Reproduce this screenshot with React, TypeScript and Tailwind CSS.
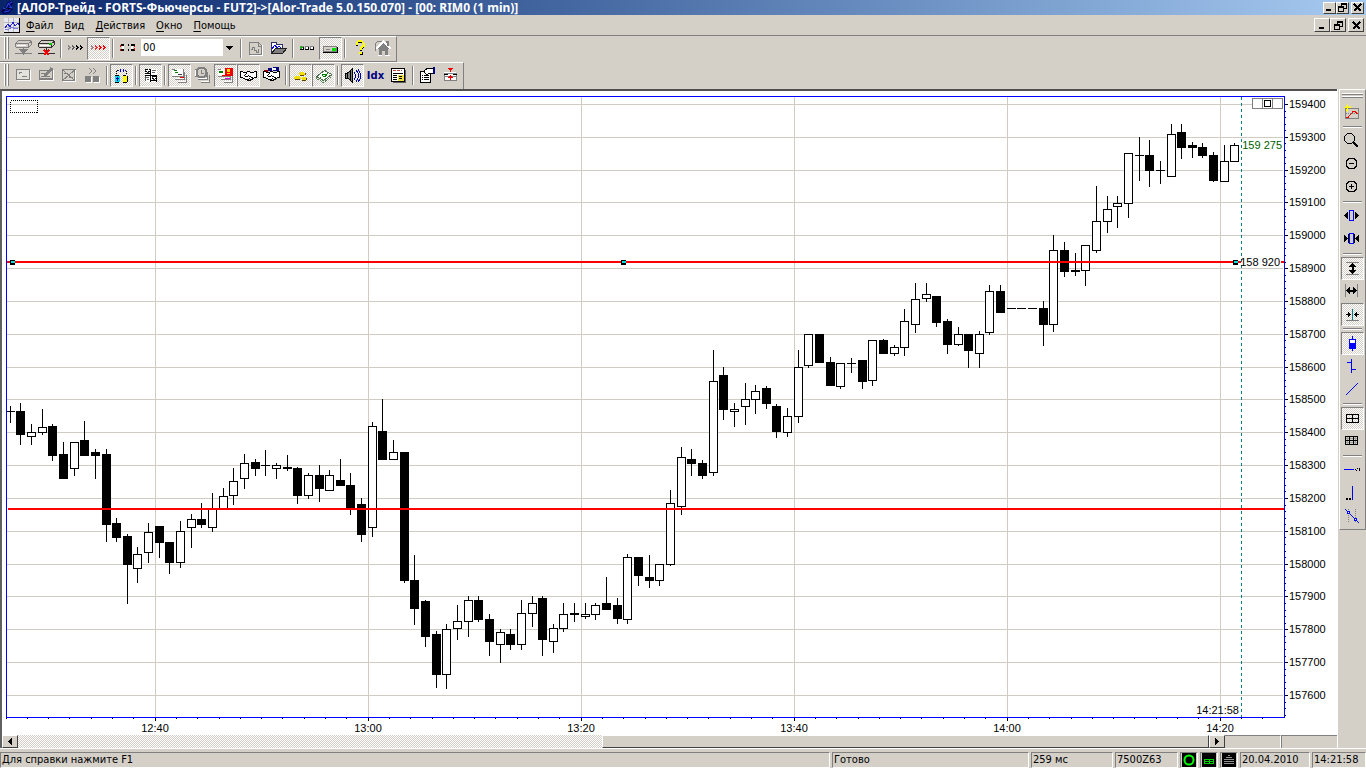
import { useState } from 'react'
import type { ReactNode } from 'react'
import clsx from 'clsx'

// [high, body top, body bottom, low, rising] in plot units, one per minute
type Candle = [number, number, number, number, number]

const CANDLES: Candle[] = [
  [406, 411, 412, 423, 0], [403, 411, 435, 445, 0], [424, 432, 437, 445, 1], [409, 427, 433, 435, 1],
  [424, 426, 456, 461, 0], [442, 454, 479, 479, 0], [442, 442, 469, 476, 1], [421, 440, 456, 456, 0],
  [449, 452, 456, 479, 0], [449, 454, 525, 542, 0], [518, 523, 538, 542, 0], [534, 536, 565, 604, 0],
  [547, 554, 569, 583, 1], [523, 532, 553, 563, 1], [526, 526, 543, 558, 0], [542, 542, 563, 574, 0],
  [521, 531, 563, 568, 1], [514, 519, 528, 548, 1], [503, 519, 525, 528, 0], [493, 508, 528, 532, 1],
  [488, 496, 510, 510, 1], [468, 481, 496, 505, 1], [454, 463, 479, 489, 1], [459, 462, 469, 476, 0],
  [450, 465, 466, 476, 0], [463, 465, 469, 479, 1], [455, 467, 469, 471, 0], [467, 468, 496, 504, 0],
  [473, 475, 496, 499, 1], [465, 475, 489, 502, 0], [470, 475, 491, 491, 1], [459, 480, 486, 486, 0],
  [473, 485, 509, 515, 0], [498, 504, 535, 542, 0], [422, 426, 528, 537, 1], [399, 431, 460, 460, 0],
  [440, 452, 460, 460, 1], [452, 452, 581, 583, 0], [555, 580, 609, 625, 0], [600, 601, 637, 647, 0],
  [631, 634, 675, 688, 0], [624, 629, 675, 689, 1], [605, 621, 629, 640, 1], [596, 600, 622, 637, 1],
  [596, 600, 620, 622, 0], [614, 619, 642, 656, 0], [629, 632, 645, 663, 1], [629, 634, 645, 650, 0],
  [600, 613, 645, 650, 1], [596, 603, 614, 627, 1], [596, 598, 640, 656, 0], [624, 628, 642, 653, 1],
  [603, 614, 629, 632, 1], [603, 613, 615, 622, 0], [603, 614, 617, 619, 1], [603, 605, 615, 620, 1],
  [577, 603, 610, 610, 0], [598, 605, 619, 624, 0], [554, 557, 620, 624, 1], [557, 557, 576, 586, 0],
  [555, 577, 581, 588, 0], [564, 564, 581, 586, 1], [490, 503, 565, 566, 1], [447, 457, 507, 515, 1],
  [449, 459, 464, 476, 0], [460, 463, 476, 479, 0], [350, 381, 473, 476, 1], [367, 375, 410, 420, 0],
  [403, 409, 412, 427, 1], [383, 399, 407, 425, 1], [385, 391, 400, 414, 1], [386, 388, 404, 409, 0],
  [404, 406, 432, 438, 0], [408, 416, 433, 437, 1], [350, 367, 417, 423, 1], [334, 334, 366, 368, 1],
  [334, 334, 363, 363, 0], [357, 362, 386, 386, 0], [363, 363, 387, 389, 1], [358, 363, 364, 373, 0],
  [360, 360, 382, 389, 0], [340, 340, 381, 386, 1], [339, 340, 354, 354, 0], [345, 347, 354, 356, 1],
  [309, 321, 348, 356, 1], [283, 299, 325, 333, 1], [283, 294, 299, 302, 1], [296, 296, 323, 327, 0],
  [319, 321, 345, 354, 0], [327, 334, 345, 346, 1], [334, 334, 351, 368, 0], [331, 334, 354, 368, 1],
  [285, 291, 333, 335, 1], [285, 291, 313, 313, 0], [308, 308, 309, 309, 0], [308, 308, 309, 309, 0],
  [308, 308, 309, 309, 0], [301, 308, 325, 346, 0], [235, 250, 325, 332, 1], [242, 250, 272, 277, 0],
  [253, 270, 272, 276, 0], [245, 245, 271, 286, 1], [186, 221, 251, 253, 1], [196, 209, 222, 233, 1],
  [196, 203, 207, 228, 1], [153, 153, 204, 218, 1], [137, 155, 156, 181, 0], [140, 155, 171, 187, 0],
  [161, 170, 171, 184, 0], [124, 134, 177, 177, 1], [124, 132, 148, 159, 0], [142, 145, 148, 158, 0],
  [143, 147, 156, 158, 0], [152, 155, 181, 182, 0], [145, 161, 182, 182, 1], [143, 145, 162, 162, 1],
]

const TIMES = ['12:40', '13:00', '13:20', '13:40', '14:00', '14:20']
const PRICES = Array.from({ length: 19 }, (_, i) => 159400 - i * 100)

const priceY = (i: number) => Math.floor(104.5 + i * 32.83)
const candleX = (i: number) => Math.floor(10.15 + i * 10.65)

const RAISED = 'border border-t-white border-l-white border-r-[#404040] border-b-[#404040] bg-[#d4d0c8]'
const DITHER = 'bg-[repeating-conic-gradient(#fff_0_25%,#d4d0c8_0_50%)] bg-[length:2px_2px]'
const UI_FONT = "font-['DejaVu_Sans_Condensed','DejaVu_Sans',sans-serif]"
const TITLE_FONT = "font-['Noto_Sans','DejaVu_Sans',sans-serif]"

function Icon({ children }: { children: ReactNode }) {
  return (
    <svg width="17" height="17" viewBox="0 0 17 17" fill="none" stroke="#000" shapeRendering="crispEdges" aria-hidden="true">
      {children}
    </svg>
  )
}

function Tool({ label, pressed = false, children }: { label: string; pressed?: boolean; children: ReactNode }) {
  const [on, setOn] = useState(pressed)
  return (
    <button
      type="button"
      aria-label={label}
      aria-pressed={pressed ? on : undefined}
      onClick={() => pressed && setOn(!on)}
      className={clsx(
        'flex h-[23px] w-[23px] shrink-0 items-center justify-center border',
        on ? `border-t-[#808080] border-l-[#808080] border-r-white border-b-white ${DITHER}` : 'border-transparent'
      )}
    >
      {children}
    </button>
  )
}

function VSep() {
  return <div className="mx-[2px] mt-[2px] h-[19px] w-[2px] shrink-0 border-l border-l-[#808080] bg-white" />
}

function HSep() {
  return <div className="my-[2px] h-[2px] w-[19px] shrink-0 border-t border-t-[#808080] bg-white" />
}

function Grip() {
  return (
    <div className="mr-[3px] ml-[4px] flex h-[22px] gap-px">
      <div className="w-[2px] border-l border-l-white bg-[#808080]" />
      <div className="w-[2px] border-l border-l-white bg-[#808080]" />
    </div>
  )
}

/* ---------- icons ---------- */

function Drive({ color }: { color: string }) {
  return (
    <g stroke={color}>
      <path d="M3.5 .5h11l2 1v3l-3 3h-12l-1-1v-3z" fill="#d4d0c8" />
      <path d="M1 3.500h12.500M13.500 3.500l3-2M13.500 3.500v4" />
      <path d="M2 5.500h9" stroke="#fff" />
      <path d="M8.500 8v5M0 13.500h17" />
    </g>
  )
}

function Chevrons({ colors }: { colors: string[] }) {
  return (
    <>
      {colors.map((c, i) => (
        <g key={i} fill={c} stroke="none">
          <path d={`M${i * 4 + 1} 5h1v1h1v1h1v1h-1v1h-1v1h-1v-2h1v-1h-1z`} />
        </g>
      ))}
    </>
  )
}

function Sheets({ color = '#808080' }: { color?: string }) {
  return (
    <>
      <path d="M1 2h11v8H1z" fill="#fff" stroke="none" />
      <path d="M13 5h1v8H4v-2h9zM15 8h1v7H7v-1h8z" fill="#fff" stroke="none" />
      <g stroke={color}>
        <path d="M1 9.500h11.500V2M4 12.500h9.500V5M7 15.500h8.500V8" />
        <path d="M1 2.500h3" />
      </g>
    </>
  )
}

function Handshake() {
  return (
    <>
      <path d="M.5 4.500h2l1 1h3l1-1h2l1 1h3l1-1h2v6h-2l-4 3h-3l-5-3h-2z" fill="#fff" />
      <path d="M6.500 6.500l-2 2 1 1h2l1-1 5 3M9 11l2 2M7 12l2 1" />
    </>
  )
}

function WindowButton({ label, small = false, d }: { label: string; small?: boolean; d: ReactNode }) {
  return (
    <button
      type="button"
      aria-label={label}
      className={clsx('flex items-center justify-center', RAISED, small ? 'h-[12px] w-[13px]' : 'h-[14px] w-[16px]')}
    >
      <svg width="9" height="9" viewBox="0 0 9 9" fill="none" stroke="#000" shapeRendering="crispEdges">{d}</svg>
    </button>
  )
}

function WindowButtons({ small = false }: { small?: boolean }) {
  return (
    <div className="flex gap-[2px]">
      <div className="flex">
        <WindowButton small={small} label="Свернуть" d={<path d="M1 7h5" strokeWidth="2" />} />
        <WindowButton
          small={small}
          label="Восстановить"
          d={<><path d="M3.500 3V.5h5v5H6M3 1.500h6" /><path d="M.5 3.500h5v5h-5zM0 4.500h6" /></>}
        />
      </div>
      <WindowButton small={small} label="Закрыть" d={<path d="M1 1l7 7M8 1L1 8" strokeWidth="1.500" />} />
    </div>
  )
}

/* ---------- bars ---------- */

function TitleBar() {
  return (
    <header className="flex h-[15px] shrink-0 items-center bg-linear-to-r from-[#0a246a] to-[#a6caf0] pr-[2px]">
      <svg width="16" height="15" viewBox="0 0 16 15" fill="none" className="shrink-0" aria-hidden="true">
        <path d="M2 9l4-2 1-4 3-2 3 2-2 4 2 2-4 4-5 1-3-2z" fill="#000060" />
        <path d="M3 8l3 1 2-5 4-2M4 12l5-1 3-4M8 3l3 4-6 3" stroke="#2850e8" />
        <path d="M3 11l4-3 4 1" stroke="#000" />
      </svg>
      <h1 className={clsx('ml-[1px] flex-1 truncate text-[12px] leading-[15px] font-bold text-white', TITLE_FONT)}>
        [АЛОР-Трейд - FORTS-Фьючерсы - FUT2]-&gt;[Alor-Trade 5.0.150.070] - [00: RIM0 (1 min)]
      </h1>
      <WindowButtons small />
    </header>
  )
}

function MenuBar() {
  return (
    <nav className="flex h-[21px] shrink-0 items-center border-b border-b-[#808080] pr-[2px] pl-[4px]">
      <svg width="16" height="15" viewBox="0 0 16 15" fill="none" shapeRendering="crispEdges" aria-hidden="true">
        <path d="M0 0h16v14H0z" fill="#e8e8f0" />
        <path d="M0 4.500h16M0 9.500h16M4.500 0v14M9.500 0v14" stroke="#b8b8c0" />
        <path d="M1 10l3-4 2 3 3-5 2 4 3-3 1 2" stroke="#2020d0" />
        <path d="M1 12l4-1 3-2 3 2 3-1" stroke="#8080e0" />
        <path d="M0 14.500h16M15.500 0v15" stroke="#000" />
      </svg>
      <div className="ml-[1px] flex flex-1 gap-px">
        {['Файл', 'Вид', 'Действия', 'Окно', 'Помощь'].map(item => (
          <button key={item} type="button" className="px-[5px] pt-[2px] text-[11px] leading-[16px]">
            <span className="underline underline-offset-2">{item[0]}</span>{item.slice(1)}
          </button>
        ))}
      </div>
      <WindowButtons />
    </nav>
  )
}

function MainToolbar() {
  return (
    <div role="toolbar" aria-label="Подключение" className="flex h-[26px] w-max items-start border-t border-r border-b border-t-white border-r-[#808080] border-b-[#808080] pr-[2px]">
      <Grip />
      <Tool label="Отключиться">
        <Icon>
          <Drive color="#808080" />
          <path d="M4 9h9l-4.500 6z" fill="#808080" stroke="none" />
        </Icon>
      </Tool>
      <Tool label="Разорвать соединение">
        <Icon>
          <Drive color="#303030" />
          <path d="M11 4h3" stroke="#00c000" strokeWidth="2" />
          <path d="M6 10l5 5M11 10l-5 5" stroke="#f00000" strokeWidth="2" />
        </Icon>
      </Tool>
      <VSep />
      <Tool label="Вперёд"><Icon><Chevrons colors={['#808080', '#606060', '#000', '#000']} /></Icon></Tool>
      <Tool label="Автопрокрутка" pressed><Icon><Chevrons colors={['#a08080', '#e03030', '#f00000', '#f00000']} /></Icon></Tool>
      <VSep />
      <Tool label="Связь">
        <Icon>
          <path d="M2 4h3v2H2zM2 9h3v2H2zM9 4h1v2H9zM12 4h4v2h-4zM9 9h1v2H9zM12 9h4v2h-4z" fill="#000" stroke="none" />
          <path d="M3 6h2v3H3zM12 6h2v3h-2z" fill="#fff" stroke="none" />
          <path d="M1 5h1v2H1zM1 9h1v2H1zM15 6h1v1h-1zM15 8h1v2h-1z" fill="#f00000" stroke="none" />
        </Icon>
      </Tool>
      <div className="relative mx-px mt-px h-[19px] w-[97px]">
        <select aria-label="Портфель" className={clsx('block h-[19px] w-full appearance-none border border-[#d4d0c8] bg-white px-[2px] py-0 text-[11px] leading-[17px]', UI_FONT)}>
          <option>00</option>
          <option>01</option>
        </select>
        <span className="pointer-events-none absolute top-px right-px flex h-[17px] w-[13px] items-center justify-center bg-[#d4d0c8]">
          <svg width="7" height="4" viewBox="0 0 7 4" shapeRendering="crispEdges"><path d="M0 0h7v1H6v1H5v1H4v1H3V3H2V2H1V1H0z" /></svg>
        </span>
      </div>
      <VSep />
      <Tool label="Новый график">
        <Icon>
          <path d="M2.500 2.500h9l3 3v9h-12z" fill="#d4d0c8" stroke="#808080" />
          <path d="M4 9.500h1v-2h2v3h2v2h2v-3h1M11.500 3v3h3" stroke="#808080" />
          <path d="M3 15.500h12.500V5" stroke="#fff" />
        </Icon>
      </Tool>
      <Tool label="Открыть">
        <Icon>
          <path d="M1.500 13.500v-11h5v2h6v3" fill="#fff" stroke="#303060" />
          <path d="M2 9l3-4 2 3 2-2 2 2" stroke="#0000e0" />
          <path d="M1.500 13.500l4-5h11l-4 5z" fill="#808080" stroke="#202020" />
        </Icon>
      </Tool>
      <VSep />
      <Tool label="Индикаторы">
        <Icon>
          <path d="M1 6h4v4H1zM6 6h4v4H6zM11 6h4v4h-4z" fill="#808080" stroke="none" />
          <path d="M2 7h2v2H2zM7 7h2v2H7zM12 7h2v2h-2z" fill="#fff" stroke="none" />
          <path d="M1 9.500h4M6 9.500h4M11 9.500h4M4.500 7v2M9.500 7v2M14.500 7v2" />
          <path d="M1 7h3v1H1zM2 6h1v3H2z" fill="#00c000" stroke="none" />
        </Icon>
      </Tool>
      <Tool label="Панель состояния" pressed>
        <Icon>
          <path d="M1.500 6.500h13v5h-13z" fill="#d4d0c8" stroke="#808080" />
          <path d="M1 12.500h14.500V7" />
          <path d="M4 9.500h4" stroke="#808080" />
          <path d="M10 8h4v3h-4z" fill="#00e000" stroke="none" />
        </Icon>
      </Tool>
      <VSep />
      <Tool label="Справка">
        <Icon>
          <path d="M6 5.500V3.500l2-2h3l2 2v3l-3 2v2" stroke="#000" strokeWidth="2" />
          <path d="M9 12h3v3H9z" fill="#000" stroke="none" />
          <path d="M5.500 5V3l2-2h3l2 2v3l-3 2v2" stroke="#ffff00" strokeWidth="2" />
          <path d="M8 12h3v2H8z" fill="#ffff00" stroke="none" />
        </Icon>
      </Tool>
      <Tool label="Домой">
        <Icon>
          <path d="M1.500 10.500v-7l2-2h6l2 3" fill="#d4d0c8" stroke="#808080" />
          <path d="M2 9l7.500-7.500L17 9" stroke="#fff" strokeWidth="2" />
          <path d="M3 9l6.500-6 6.500 6h-2v6h-3v-4H8v4H5V9z" fill="#808080" stroke="none" />
          <path d="M12 2h2v4" stroke="#808080" strokeWidth="2" />
          <path d="M4 15.500h4M11 15.500h4.500" stroke="#fff" />
        </Icon>
      </Tool>
    </div>
  )
}

function TradeToolbar() {
  return (
    <div role="toolbar" aria-label="Торговля" className="flex h-[27px] w-max items-start border-t border-r border-t-white border-r-[#808080] pt-px pr-px">
      <Grip />
      <Tool label="Заявка">
        <Icon>
          <path d="M1.500 2.500h13v10h-13z" fill="#e4e2dc" stroke="#808080" />
          <path d="M4 5.500h3M7 9.500h5M4 6.500h1" stroke="#808080" />
          <path d="M2 13.500h13.500V3" stroke="#fff" />
        </Icon>
      </Tool>
      <Tool label="Изменить заявку">
        <Icon>
          <path d="M1.500 3.500h13v9h-13z" fill="#d4d0c8" stroke="#808080" />
          <path d="M3 6.500h5M3 9.500h9M2 11.500h12" stroke="#808080" />
          <path d="M7 9l7-8" stroke="#808080" strokeWidth="3" />
          <path d="M2 13.500h13.500V3" stroke="#fff" />
        </Icon>
      </Tool>
      <Tool label="Снять заявку">
        <Icon>
          <path d="M1.500 2.500h12v11h-12z" stroke="#808080" />
          <path d="M2 13L15 2M2 3l11 10M3 6.500h4M8 10.500h4" stroke="#808080" />
          <path d="M2 14.500h12.500V3" stroke="#fff" />
        </Icon>
      </Tool>
      <Tool label="Переставить">
        <Icon>
          <path d="M5 1l3 3-3 3M9 1l3 3-3 3" stroke="#808080" />
          <path d="M1 9h6v6H1zM9 9h6v6H9z" fill="#808080" stroke="none" />
          <path d="M2 15.500h5.500V10M10 15.500h5.500V10" stroke="#fff" />
        </Icon>
      </Tool>
      <VSep />
      <Tool label="Инструменты" pressed>
        <Icon>
          <path d="M3.500 7V3.500h2M13.500 7V3.500h-2" stroke="#000" strokeDasharray="1 1" />
          <path d="M7 2h1v3H7zM10 2h1v3h-1zM5 3h1v1H5zM12 3h1v1h-1z" fill="#0000c0" stroke="none" />
          <path d="M2 9h5v6H2z" fill="#00d8f0" stroke="none" />
          <path d="M10 9h4v6h-4z" fill="#ffff00" stroke="none" />
          <path d="M4.500 10v4M3 11.500h3" stroke="#0000a0" />
          <path d="M2 8.500h4M10 8.500h3M14.500 9v6M2 15.500h4M10 15.500h4" />
        </Icon>
      </Tool>
      <VSep />
      <Tool label="Котировки" pressed>
        <Icon>
          <path d="M3 2h12v13H3z" fill="#fff" stroke="none" />
          <path d="M3 2.500h3M7 2.500h2M3 4.500h2M6 4.500h3M3 6.500h5M10 9.500h4M10 11.500h2M13 11.500h2M9 13.500h5M8.500 2v13M14.500 9v6M3 8.500h12" />
          <path d="M3 3.500h1M10 10.500h1M5 5.500h2M11 12.500h2" stroke="#404040" />
          <path d="M4 10.500h3M10 5.500h3M5 12.500h2M10 3.500h4M3.500 9v5" stroke="#606060" />
        </Icon>
      </Tool>
      <VSep />
      <Tool label="Заявки" pressed>
        <Icon>
          <Sheets />
          <path d="M3 3.500h3M4 5.500h3" stroke="#008000" />
          <path d="M7 7.500h4" stroke="#404040" />
          <path d="M9 10.500h4" stroke="#f00000" />
        </Icon>
      </Tool>
      <Tool label="Условные заявки">
        <Icon>
          <Sheets />
          <path d="M5 1h5l2 2v5l-2 2H5L3 8V3z" fill="#d4d0c8" stroke="#808080" strokeWidth="2" />
          <path d="M7.500 3v3h2" stroke="#808080" />
        </Icon>
      </Tool>
      <Tool label="Стоп-заявки" pressed>
        <Icon>
          <Sheets />
          <path d="M2 4.500h4" stroke="#008000" strokeWidth="2" />
          <path d="M5 8.500h4" stroke="#f00000" />
          <path d="M8 11.500h5" stroke="#e000e0" />
          <path d="M8 1h8v8H8z" fill="#f00000" stroke="none" />
          <path d="M10 2h3v3h-3zM10 6h3v1h-3z" fill="#ffe000" stroke="none" />
        </Icon>
      </Tool>
      <Tool label="Сделки" pressed><Icon><Handshake /></Icon></Tool>
      <Tool label="Адресные сделки">
        <Icon>
          <path d="M5 1h4v3H5zM10 0h6v4h-6z" fill="#000080" stroke="none" />
          <path d="M1 3h4v3H1z" fill="#a00000" stroke="none" />
          <path d="M9 1h4v2H9z" fill="#fff" stroke="none" />
          <Handshake />
        </Icon>
      </Tool>
      <VSep />
      <Tool label="Позиции по деньгам" pressed>
        <Icon>
          <path d="M8 5h4v1h1v2H7V6h1zM3 9h5v1h1v2H2v-2h1zM10 10h4v3h-4z" fill="#f0e000" stroke="none" />
          <path d="M8 8.500h4M3 12.500h5M10 13.500h4M13.500 6v2M14.500 11v2" stroke="#604000" />
        </Icon>
      </Tool>
      <Tool label="Портфель" pressed>
        <Icon>
          <path d="M1.500 9.500l8-6 7 4-8 6z" fill="#fff" stroke="#507050" />
          <path d="M1.500 9.500v2l7 4 8-6v-2" stroke="#508050" strokeDasharray="2 1" />
          <path d="M7 8l3-1 2 1-3 2zM5 10h1M12 6h1" stroke="#008000" />
        </Icon>
      </Tool>
      <VSep />
      <Tool label="Звук" pressed>
        <Icon>
          <path d="M1 6h3l4-4v13l-4-4H1z" fill="#808080" stroke="#000" />
          <path d="M3 5v7M6 4v9" />
          <path d="M10 5l1 2v4l-1 2M12 3l2 3v5l-2 4M14 2l2 4v6l-2 3" stroke="#0000a0" />
        </Icon>
      </Tool>
      <Tool label="Индексы">
        <span className="font-['DejaVu_Sans',sans-serif] text-[10px] leading-[12px] font-bold text-[#000080]">Idx</span>
      </Tool>
      <Tool label="Новости">
        <Icon>
          <path d="M1.500 1.500h13v13h-13z" fill="#fff" />
          <path d="M3 3.500h9" stroke="#c04040" strokeDasharray="3 1" />
          <path d="M3 6.500h10M3 8.500h4M3 10.500h4M3 12.500h4" />
          <path d="M8 8h6v6H8z" fill="#f0e040" stroke="none" />
          <path d="M9 9.500h3M9 11.500h3" />
          <path d="M3 15.500h12.500V3" stroke="#606060" />
        </Icon>
      </Tool>
      <VSep />
      <Tool label="Свойства">
        <Icon>
          <path d="M1.500 4.500h10v11h-10z" fill="#fff" />
          <path d="M3 8.500h1M5 8.500h5M3 10.500h1M5 10.500h5M3 12.500h1M5 12.500h5" />
          <path d="M5 4l4-3h5v5h-4l-2 2-2-2z" fill="#fff" />
          <path d="M14 0h2v7h-2z" fill="#000080" stroke="none" />
        </Icon>
      </Tool>
      <Tool label="Стакан">
        <Icon>
          <path d="M2 5h12v9H2z" fill="#fff" stroke="none" />
          <path d="M2 6.500h12M2 9.500h12M2 13.500h12M2.500 6v8M14.500 6v8" stroke="#808080" />
          <path d="M2 7.500h4M11 7.500h4" />
          <path d="M6 1h5v1h-1v1H9v2H8V3H7V2H6zM8 8h1v1h1v1h1v1H9v2H8v-2H6v-1h1V9h1z" fill="#f00000" stroke="none" />
        </Icon>
      </Tool>
    </div>
  )
}

function ChartToolbar() {
  return (
    <aside
      role="toolbar"
      aria-label="График"
      className="flex w-[27px] flex-col items-center border-t border-r border-b border-l border-t-white border-r-[#808080] border-b-[#808080] border-l-white pb-px [&_button:not([aria-pressed=true])]:pr-[2px] [&_button:not([aria-pressed=true])]:pb-[2px]"
    >
      <div className="mt-[3px] mb-[3px] flex w-[21px] flex-col gap-px">
        <div className="h-[2px] border-t border-t-white bg-[#808080]" />
        <div className="h-[2px] border-t border-t-white bg-[#808080]" />
      </div>
      <Tool label="Новый индикатор">
        <Icon>
          <path d="M2.500 5.500h13v10h-13z" stroke="#808080" />
          <path d="M3 10.500h12" stroke="#808080" strokeDasharray="1 1" />
          <path d="M3 14.500h2l5-6h2l2 2h1" stroke="#f00000" />
          <path d="M4.500 1v8M1 4.500h7M3 3h1v1H3zM6 3h1v1H6zM3 6h1v1H3z" stroke="#ffff00" />
        </Icon>
      </Tool>
      <HSep />
      <Tool label="Лупа">
        <Icon>
          <path d="M4.500 1.500h4l3 3v4l-3 3h-4l-3-3v-4z" />
          <path d="M10 10l5 5" strokeWidth="2" />
        </Icon>
      </Tool>
      <Tool label="Уменьшить">
        <Icon><path d="M6 3.500h5l2.500 2.500v5l-2.500 2.500H6L3.500 11V6zM6 8.500h5" /></Icon>
      </Tool>
      <Tool label="Увеличить">
        <Icon><path d="M6 3.500h5l2.500 2.500v5l-2.500 2.500H6L3.500 11V6zM6 8.500h5M8.500 6v5" /></Icon>
      </Tool>
      <HSep />
      <Tool label="Расширить">
        <Icon>
          <path d="M6.500 3.500h4v10h-4z" stroke="#0000ff" />
          <path d="M5 5v7L1 8.500zM12 5v7l4-3.500z" fill="#000" stroke="none" />
        </Icon>
      </Tool>
      <Tool label="Сузить">
        <Icon>
          <path d="M6.500 3.500h4v10h-4z" stroke="#0000ff" />
          <path d="M1 5v7l4-3.500zM16 5v7l-4-3.500z" fill="#000" stroke="none" />
          <path d="M5.500 4v9M11.500 4v9" />
        </Icon>
      </Tool>
      <HSep />
      <Tool label="Автомасштаб" pressed>
        <Icon>
          <path d="M2 2.500h13M2 14.500h13" stroke="#808080" />
          <path d="M8.500 3l4 4h-3v3h3l-4 4-4-4h3V7h-3z" fill="#000" stroke="none" />
        </Icon>
      </Tool>
      <Tool label="По ширине">
        <Icon>
          <path d="M2.500 2v13M14.500 2v13" stroke="#808080" />
          <path d="M3 8.500l4-4v3h3v-3l4 4-4 4v-3H7v3z" fill="#000" stroke="none" />
        </Icon>
      </Tool>
      <Tool label="По центру" pressed>
        <Icon>
          <path d="M2 14.500h13" stroke="#808080" />
          <path d="M8.500 3v11" stroke="#008080" />
          <path d="M2 8.500h4M11 8.500h4" />
          <path d="M4 5v7l3-3.500zM13 5v7l-3-3.500z" fill="#000" stroke="none" />
        </Icon>
      </Tool>
      <HSep />
      <Tool label="Свечи" pressed>
        <Icon>
          <path d="M8.500 1v15" stroke="#0000ff" />
          <path d="M5.500 4.500h6v9h-6z" fill="#fff" stroke="#0000ff" />
          <path d="M5 8h7v6H5z" fill="#0000ff" stroke="none" />
        </Icon>
      </Tool>
      <Tool label="Бары">
        <Icon><path d="M8.500 2v14M4 5.500h4M9 12.500h4" stroke="#0000ff" /></Icon>
      </Tool>
      <Tool label="Линия">
        <Icon><path d="M3 15L15 3" stroke="#0000ff" /></Icon>
      </Tool>
      <HSep />
      <Tool label="Сетка" pressed>
        <Icon><path d="M2.500 4.500h12v8h-12zM2 8.500h13M8.500 4v9" /></Icon>
      </Tool>
      <Tool label="Мелкая сетка">
        <Icon>
          <path d="M3 6.500h11M3 10.500h11M4.500 5v8M12.500 5v8" stroke="#a0a0a0" />
          <path d="M2.500 4.500h12v8h-12zM2 8.500h13M6.500 4v9M10.500 4v9" />
        </Icon>
      </Tool>
      <HSep />
      <Tool label="Уровень">
        <Icon>
          <path d="M1 8.500h10" stroke="#0000ff" />
          <path d="M12 8.500h1M14 7.500h1M16 7v3M13.500 9v1" />
        </Icon>
      </Tool>
      <Tool label="Вертикаль">
        <Icon>
          <path d="M9.500 2v14" stroke="#0000ff" />
          <path d="M3 15h2M6 15h2" strokeWidth="2" />
        </Icon>
      </Tool>
      <Tool label="Трендовая линия">
        <Icon>
          <path d="M5.500 2v13M12.500 2v13" stroke="#808080" strokeDasharray="1 1" />
          <path d="M2 2l14 14" stroke="#0000ff" />
          <path d="M4.500 4.500h2v2h-2zM11.500 11.500h2v2h-2z" fill="#fff" stroke="#0000ff" />
        </Icon>
      </Tool>
    </aside>
  )
}

/* ---------- chart ---------- */

function Handle({ x }: { x: number }) {
  return (
    <g stroke="none">
      <rect x={x} y="260" width="5" height="5" fill="#000" />
      <rect x={x} y="261" width="5" height="2" fill="#00e0e0" />
      <rect x={x} y="261" width="1" height="2" fill="#000" />
    </g>
  )
}

function Chart() {
  return (
    <svg
      viewBox="2 91 1335 644"
      preserveAspectRatio="xMinYMin meet"
      className="block min-h-0 w-full flex-1 bg-white font-['Liberation_Sans',Arial,sans-serif] text-[11px]"
      role="img"
      aria-label="RIM0, 1 мин"
    >
      <g shapeRendering="crispEdges">
        {/* grid */}
        <g fill="#d0ccc4">
          {PRICES.map((p, i) => <rect key={p} x="7" y={priceY(i)} width="1276" height="1" />)}
          {TIMES.map((t, i) => <rect key={t} x={155 + i * 213} y="97" width="1" height="620" />)}
        </g>

        {CANDLES.map(([high, top, bottom, low, up], i) => {
          const x = candleX(i)
          const left = Math.max(x - 4, 7)
          return (
            <g key={i}>
              <rect x={x} y={high} width="1" height={low - high} />
              <rect x={left} y={top} width={x + 5 - left} height={bottom - top} />
              {up === 1 && <rect x={x - 3} y={top + 1} width="7" height={bottom - top - 2} fill="#fff" />}
            </g>
          )
        })}

        {/* price levels */}
        <rect x="8" y="508" width="1276" height="2" fill="#f00" />
        <rect x="7" y="261" width="1234" height="2" fill="#f00" />
        <rect x="1281" y="261" width="3" height="2" fill="#f00" />
        <Handle x={10} />
        <Handle x={621} />
        <Handle x={1233} />
        <path d="M1241.500 97v620" stroke="#008080" strokeDasharray="3 3" />

        {/* frame and ticks */}
        <path d="M6.500 96v622M6 96.500h1279M1284.500 96v622M6 717.500h1279" stroke="#0000ff" fill="none" />
        {PRICES.map((p, i) => (
          <g key={p}>
            <rect x="1285" y={priceY(i)} width="3" height="1" />
            {[1, 2, 3, 4].map(k => {
              const y = Math.floor(104.5 + i * 32.83 + k * 6.57)
              return y < 717 && <rect key={k} x="1285" y={y} width="1" height="1" />
            })}
          </g>
        ))}
        {Array.from({ length: 60 }, (_, i) => (
          <rect key={i} x={Math.floor(6 + i * 21.3)} y="718" width="1" height={i % 10 === 7 ? 3 : 1} />
        ))}

        <rect x="10.500" y="100.500" width="27" height="12" fill="none" stroke="#000" strokeDasharray="1 1" />
        <path d="M1252.500 98.500h30v10h-30zM1262.500 98v10M1272.500 98v10" fill="#fff" stroke="#808080" />
        <rect x="1264.500" y="100.500" width="6" height="6" fill="#fff" stroke="#000" />
      </g>

      {PRICES.map((p, i) => <text key={p} x="1289" y={priceY(i) + 4}>{p}</text>)}
      {TIMES.map((t, i) => <text key={t} x={155 + i * 213} y="732" textAnchor="middle">{t}</text>)}
      <text x="1282" y="149" textAnchor="end" fill="#006000">159 275</text>
      <text x="1280" y="266" textAnchor="end">158 920</text>
      <text x="1239" y="714" textAnchor="end">14:21:58</text>
    </svg>
  )
}

function ScrollBar() {
  return (
    <div className="flex h-[13px] shrink-0">
      <button type="button" aria-label="Влево" className={clsx('flex w-[16px] items-center justify-center', RAISED)}>
        <svg width="4" height="7" viewBox="0 0 4 7" shapeRendering="crispEdges"><path d="M4 0v7L0 3.500z" /></svg>
      </button>
      <div className={clsx('flex flex-1 justify-end', DITHER)}>
        <div className={clsx('w-[51%]', RAISED)} />
      </div>
      <button type="button" aria-label="Вправо" className={clsx('flex w-[16px] items-center justify-center', RAISED)}>
        <svg width="4" height="7" viewBox="0 0 4 7" shapeRendering="crispEdges"><path d="M0 0v7l4-3.500z" /></svg>
      </button>
      <div className="w-[56px] border-t border-r border-t-[#808080] border-r-white" />
      <div className="w-[56px] border-t border-l border-t-[#808080] border-l-[#808080]" />
    </div>
  )
}

function Cell({ className, children }: { className: string; children: ReactNode }) {
  return (
    <div className={clsx('flex h-[16px] items-center overflow-hidden border border-t-[#808080] border-l-[#808080] border-r-white border-b-white pl-px whitespace-nowrap', className)}>
      {children}
    </div>
  )
}

function StatusBar() {
  return (
    <footer className="flex shrink-0 gap-[2px] border-t border-t-white pt-[3px] text-[11px] leading-[14px]">
      <Cell className="flex-1">Для справки нажмите F1</Cell>
      <Cell className="w-[197px]">Готово</Cell>
      <Cell className="w-[82px]">259 мс</Cell>
      <Cell className="w-[63px]">7500Z63</Cell>
      <Cell className="w-[18px]">
        <svg width="14" height="14" viewBox="0 0 14 14"><path d="M0 0h14v14H0z" /><circle cx="7" cy="7" r="4.500" fill="none" stroke="#00ff00" strokeWidth="2" /></svg>
      </Cell>
      <Cell className="w-[18px]">
        <svg width="14" height="14" viewBox="0 0 14 14" shapeRendering="crispEdges"><path d="M0 0h14v14H0z" /><path d="M2.500 6.500h9v4h-9zM2 8.500h10M7.500 6v5" fill="none" stroke="#00d000" /></svg>
      </Cell>
      <Cell className="w-[18px]">
        <svg width="14" height="14" viewBox="0 0 14 14" shapeRendering="crispEdges"><path d="M0 0h14v14H0z" /><path d="M6 2.500h2M4 4.500h6M2 6.500h10M2 8.500h10M2 10.500h10" stroke="#909090" /></svg>
      </Cell>
      <Cell className="w-[70px]">20.04.2010</Cell>
      <Cell className="w-[54px]">14:21:58</Cell>
    </footer>
  )
}

export default function App() {
  return (
    <div className={clsx('flex h-screen flex-col overflow-hidden bg-[#d4d0c8] text-black', UI_FONT)}>
      <TitleBar />
      <MenuBar />
      <MainToolbar />
      <TradeToolbar />
      <div className="flex min-h-0 flex-1">
        <main className="flex min-w-0 flex-1 flex-col border-t-2 border-l-2 border-t-[#505050] border-l-[#606060]">
          <Chart />
          <ScrollBar />
        </main>
        <div className="flex w-[29px] shrink-0 flex-col items-end border-l border-l-white">
          <ChartToolbar />
        </div>
      </div>
      <StatusBar />
    </div>
  )
}
